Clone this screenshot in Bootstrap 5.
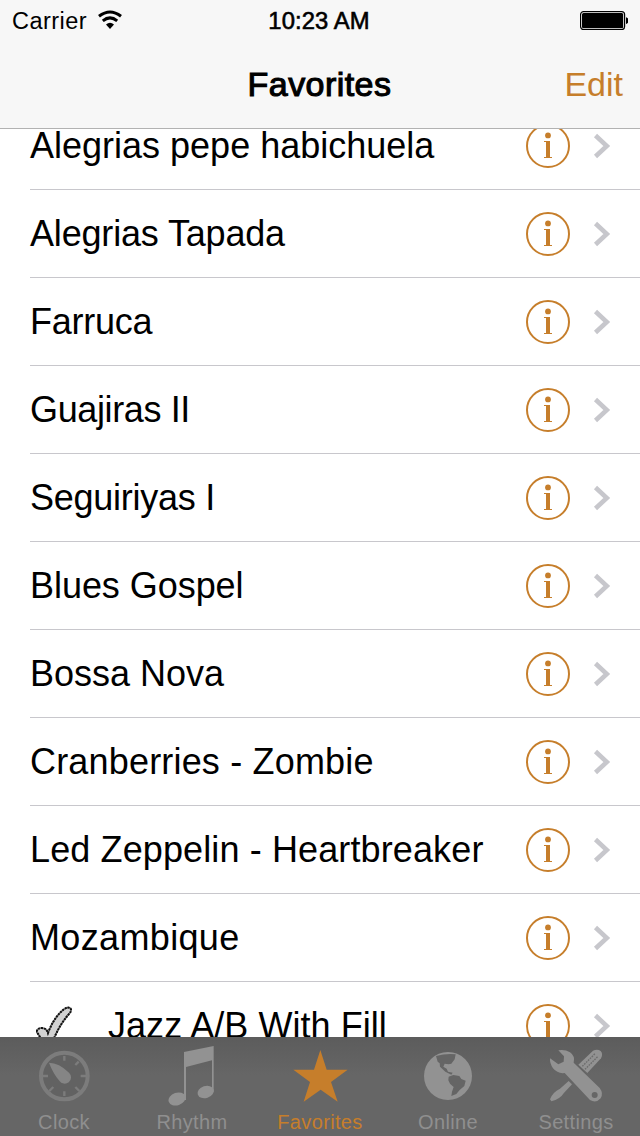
<!DOCTYPE html>
<html lang="en">
<head>
<meta charset="utf-8">
<meta name="viewport" content="width=device-width, initial-scale=1">
<title>Favorites</title>
<link href="https://cdn.jsdelivr.net/npm/bootstrap@5.3.0/dist/css/bootstrap.min.css" rel="stylesheet">
<style>
  :root { --accent: #c67e2b; }
  body { font-family: "Liberation Sans", Arial, sans-serif; color: #000; background: #fff; }
  .screen { height: 1136px; width: 640px; }
  .topbar { height: 129px; background: #f7f7f7; border-bottom: 1px solid #b2b2b2; }
  .status { height: 40px; font-size: 24px; line-height: 42px; padding: 0 12px; }
  .status svg { margin-top: -2px; }
  .status .carrier { letter-spacing: .45px; font-size: 23.5px; }
  .wifi { margin-left: 8px; }
  .clock-text { -webkit-text-stroke: .6px #000; letter-spacing: .1px; font-size: 23.8px; margin-left: -2px; }
  .titlebar { height: 88px; font-size: 34px; line-height: 88px; padding: 0 17px; }
  .screen-title { font-size: 34px; line-height: 88px; font-weight: 400; -webkit-text-stroke: 1.1px #000; letter-spacing: .45px; margin-left: -1px; }
  .edit-link { color: var(--accent); }
  .list-area { min-height: 0; }
  .songs { margin-top: -27px; }
  .song { height: 88px; margin-left: 30px; border-bottom: 1px solid #c8c7cc; font-size: 36px; line-height: 87px; padding-right: 26px; flex-shrink: 0; }
  .song svg { display: block; }
  .info-icon { color: var(--accent); margin-right: 20px; }
  .check-icon { margin-right: 36px; margin-left: 6px; }
  .tabs { height: 99px; background: linear-gradient(#5c5c5c, #666 38px); font-size: 20px; letter-spacing: .35px; }
  .tab { width: 128px; color: #8f8f8f; text-decoration: none; line-height: 24px; }
  .tab.current { color: var(--accent); }
  .tab svg { display: block; margin-bottom: 3px; }
</style>
</head>
<body>
<svg class="d-none">
  <symbol id="info" viewBox="0 0 44 44">
    <circle cx="22" cy="22" r="21" fill="none" stroke="currentColor" stroke-width="2"/>
    <circle cx="22" cy="11.400" r="2.900" fill="currentColor"/>
    <path d="M18 17h6v16h2v1H18v-1h2V18H18z" fill="currentColor"/>
  </symbol>
</svg>

<div class="screen d-flex flex-column overflow-hidden">
  <header class="topbar flex-shrink-0">
    <div class="status row g-0">
      <div class="col d-flex align-items-center">
        <span class="carrier">Carrier</span>
        <svg class="wifi" width="30" height="20" viewBox="0 0 30 20" fill="none" stroke="#000">
          <path d="M4 6.300Q15-2.300 26 6.300" stroke-width="3"/>
          <path d="M7.800 10.800Q15 4.900 22.200 10.800" stroke-width="3"/>
          <path d="M11 14.600Q15 10.800 19 14.600L15 18.900z" fill="#000" stroke="none"/>
        </svg>
      </div>
      <div class="col-auto clock-text">10:23 AM</div>
      <div class="col d-flex align-items-center justify-content-end">
        <svg width="50" height="20" viewBox="0 0 50 20">
          <rect x="2.600" y="1.600" width="44" height="18" rx="3" fill="#fff" stroke="#000" stroke-width="1.200"/>
          <rect x="4" y="3" width="41.200" height="15.200" rx="1.500"/>
          <path d="M48 7.300q2.800 1 2.800 3.300t-2.800 3.300z"/>
        </svg>
      </div>
    </div>
    <div class="titlebar row g-0">
      <div class="col"></div>
      <h1 class="screen-title col-auto mb-0">Favorites</h1>
      <div class="col text-end edit-link">Edit</div>
    </div>
  </header>

  <main class="list-area flex-fill overflow-hidden">
    <div class="songs d-flex flex-column" id="songs"></div>
  </main>

  <nav class="tabs d-flex flex-shrink-0">
    <a class="tab text-center">
      <svg width="128" height="70" viewBox="0 171 384 210">
        <circle cx="193" cy="288" r="70" fill="#626262" stroke="#7c7c7c" stroke-width="12"/>
        <g stroke="#7c7c7c" stroke-width="7">
          <path d="M193 228v14M193 334v14M124 288h20M242 288h20M226 255l10-10M226 321l12 12M160 321l-12 12"/>
        </g>
        <path d="M147 248q30 0 60 30a19 19 0 1 1-29 24Q160 282 147 248z" fill="#858585"/>
      </svg>
      Clock</a>
    <a class="tab text-center">
      <svg width="128" height="70" viewBox="-6 171 384 210" fill="#929292">
        <path d="M162 216L251 198V335H246V241L168 261V360H162z"/>
        <ellipse cx="141" cy="357" rx="26" ry="19" transform="rotate(-18 141 357)"/>
        <ellipse cx="227" cy="336" rx="25" ry="18" transform="rotate(-18 227 336)"/>
      </svg>
      Rhythm</a>
    <a class="tab current text-center">
      <svg width="128" height="70" viewBox="-12 171 384 210" fill="currentColor">
        <path d="M181 210L200 269H263L213 306 233 365 182 329 131 365 150 306 100 269H162z"/>
      </svg>
      Favorites</a>
    <a class="tab text-center">
      <svg width="128" height="70" viewBox="-18 171 384 210">
        <circle cx="174" cy="288" r="72" fill="#929292"/>
        <path d="M138 228Q168 220 197 223L194 238 184 251 176 253 164 251 160 260 170 266 174 275 188 278 184 284 166 275 150 260 149 250 143 245z" fill="#656565"/>
        <path d="M176 290L190 285 208 288 214 297 227 302 223 318 209 330 199 342 184 348 186 335 191 321 180 311 175 301z" fill="#656565"/>
      </svg>
      Online</a>
    <a class="tab text-center">
      <svg width="128" height="70" viewBox="6 171 384 210">
        <g fill="#929292">
          <path d="M205 254L249 212Q262 206 272 213 280 222 273 235L232 279z"/>
          <path d="M176 303L186 313 161 340Q151 357 124 364L120 358Q128 336 150 326z"/>
          <path d="M145 211Q164 207 180 217 196 228 191 248L269 324Q281 340 272 355 258 371 240 360L164 279Q143 282 129 265 119 251 120 235L145 253 161 245 162 229z"/>
        </g>
        <path d="M217 259l38-38M225 268l38-38" stroke="#6c6c6c" stroke-width="4" stroke-dasharray="5 3" fill="none"/>
        <circle cx="254" cy="345" r="9" fill="#666"/>
      </svg>
      Settings</a>
  </nav>
</div>

<script src="https://cdn.jsdelivr.net/npm/bootstrap@5.3.0/dist/js/bootstrap.bundle.min.js"></script>
<script>
  // Each entry: song name and its tracking in pixels
  const songs = [["Alegrias pepe habichuela", 0], ["Alegrias Tapada", -.17], ["Farruca", -.25], ["Guajiras II", -.37],
    ["Seguiriyas I", -.25], ["Blues Gospel", -.05], ["Bossa Nova", 0], ["Cranberries - Zombie", .18],
    ["Led Zeppelin - Heartbreaker", .12], ["Mozambique", .35], ["Jazz A/B With Fill", .04]];
  const playing = 10;
  const shape = "M110 152Q112 141 126 141 140 142 144 156 160 112 190 86 205 75 212 83 216 90 206 100 180 130 162 172L148 194 134 190z";
  const check = `<svg class="check-icon flex-shrink-0" width="36" height="42" viewBox="108 72 108 126">
    <path d="${shape}" fill="#d2d2d2" stroke="#777" stroke-width="5"/>
    <path d="${shape}" fill="none" stroke="#111" stroke-width="6" stroke-dasharray="6 3"/></svg>`;
  document.getElementById("songs").innerHTML = songs.map(([name, tracking], i) => `
    <div class="song d-flex align-items-center">
      ${i === playing ? check : ""}<span class="flex-fill text-nowrap" style="letter-spacing:${tracking}px">${name}</span>
      <svg class="info-icon flex-shrink-0" width="44" height="44"><use href="#info"/></svg>
      <svg class="flex-shrink-0" width="24" height="26" viewBox="0 0 24 26">
        <path d="M5.500 2.500L16.800 13 5.500 23.500" fill="none" stroke="#c7c7cc" stroke-width="4.600"/></svg>
    </div>`).join("");
</script>
</body>
</html>
